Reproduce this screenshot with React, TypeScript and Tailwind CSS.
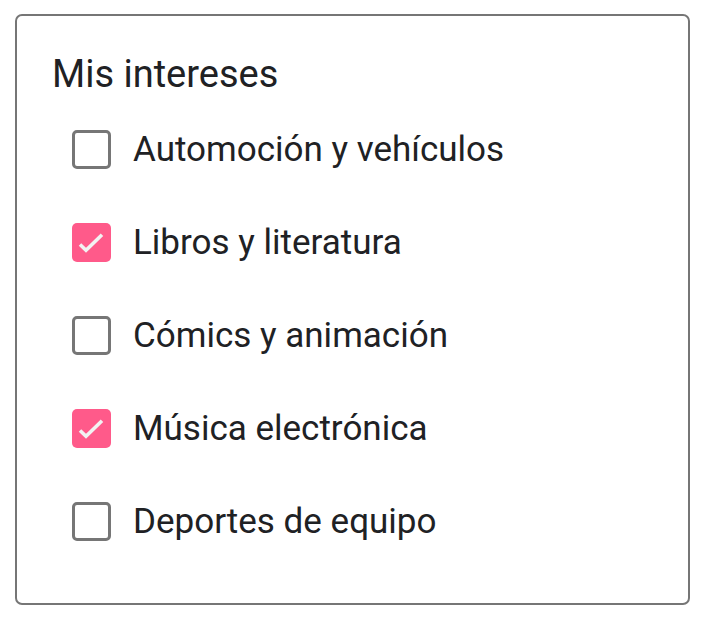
import { useState } from 'react';

const items = [
  { label: 'Automoción y vehículos', checked: false },
  { label: 'Libros y literatura', checked: true },
  { label: 'Cómics y animación', checked: false },
  { label: 'Música electrónica', checked: true },
  { label: 'Deportes de equipo', checked: false }
];

const Checkbox = ({ checked, onClick }: { checked: boolean; onClick: () => void }) => (
  <button
    type="button"
    onClick={onClick}
    className={
      checked
        ? 'w-[39px] h-[39px] rounded-[5px] bg-[#ff5a8a] shrink-0 relative'
        : 'w-[39px] h-[39px] rounded-[5px] border-[3px] border-[#767676] bg-white shrink-0'
    }
  >
    {checked && (
      <svg className="absolute inset-0 w-[39px] h-[39px]" viewBox="0 0 39 39" fill="none">
        <path d="M8 21.5L14 27.2L30 11.8" stroke="#f2f2f2" strokeWidth="3.6" />
      </svg>
    )}
  </button>
);

export default function App() {
  const [state, setState] = useState(items.map((i) => i.checked));

  return (
    <div className="min-h-screen bg-white pt-[14px] pl-[15px] font-['Roboto',sans-serif] text-[#202124]">
      <div className="w-[675px] h-[591px] border-2 border-[#767676] rounded-[7px] pl-[35px] pt-[35px]">
        <h1 className="text-[38px] leading-[46px] mb-[6px]">Mis intereses</h1>
        <div className="flex flex-col pl-[20px]">
          {items.map((item, idx) => (
            <label key={item.label} className="h-[93px] flex items-center gap-[22px] cursor-pointer">
              <Checkbox
                checked={state[idx]}
                onClick={() => setState((s) => s.map((v, i) => (i === idx ? !v : v)))}
              />
              <span className="text-[35px] leading-[44px]">{item.label}</span>
            </label>
          ))}
        </div>
      </div>
    </div>
  );
}
